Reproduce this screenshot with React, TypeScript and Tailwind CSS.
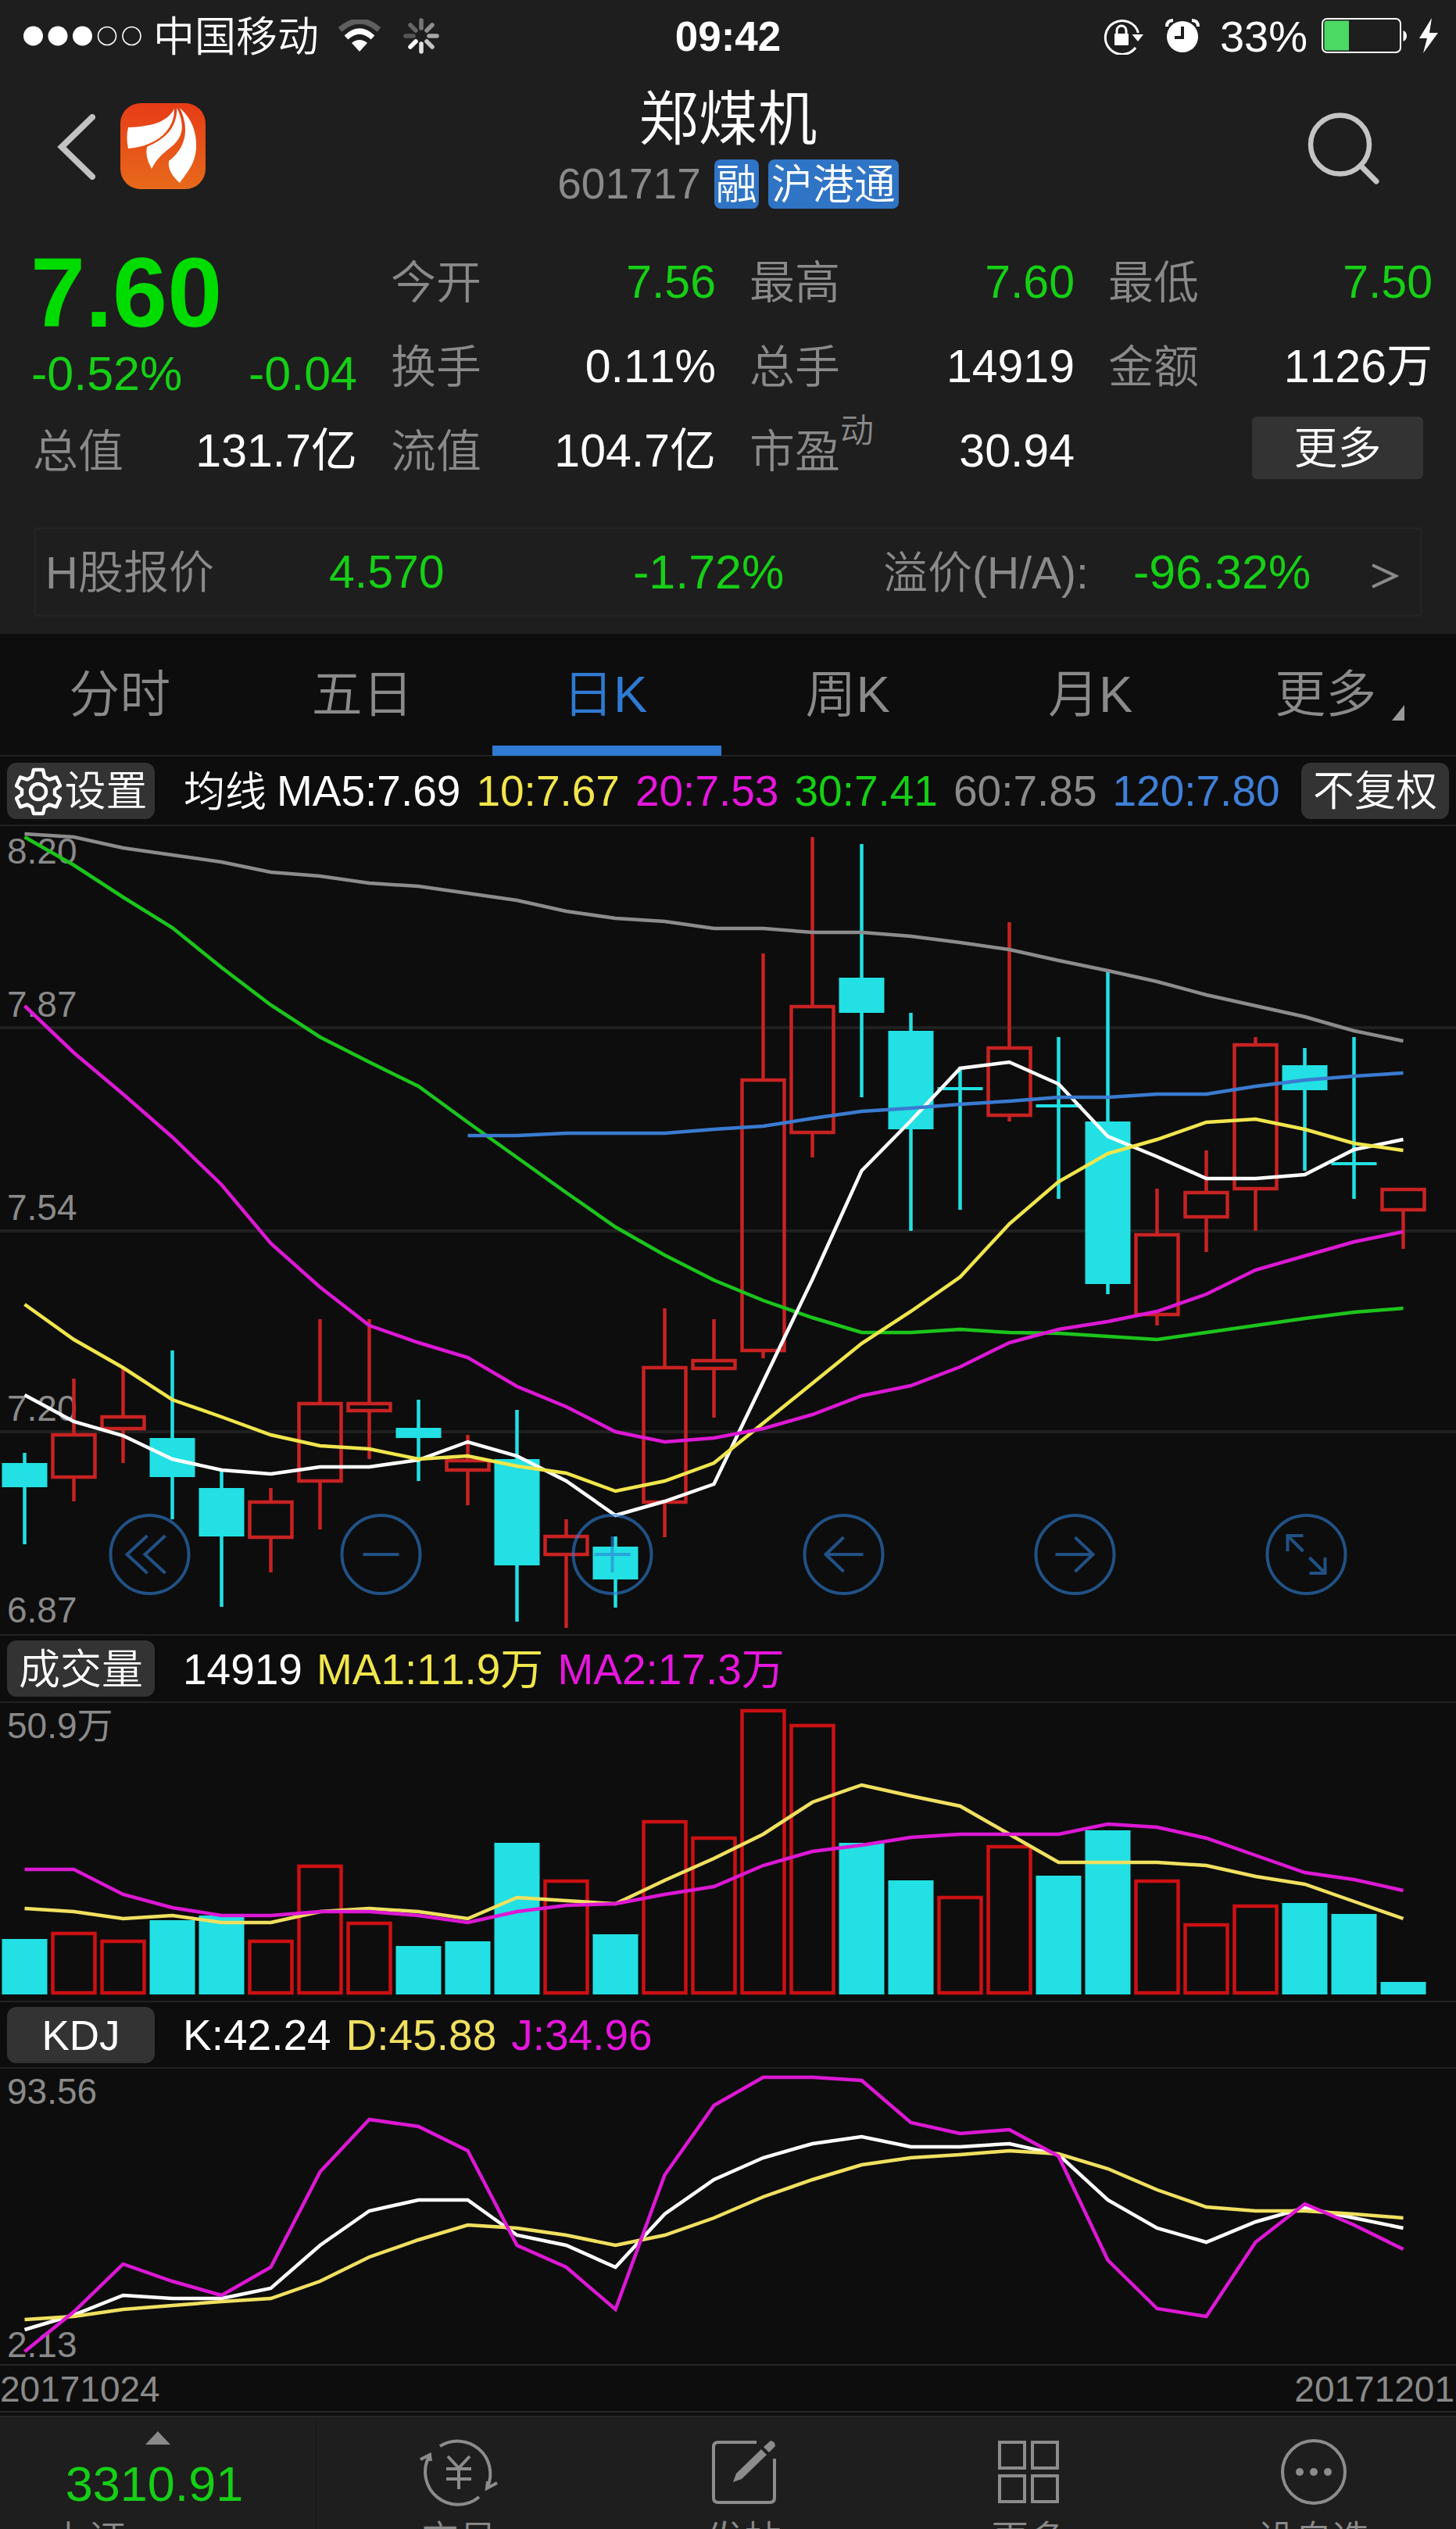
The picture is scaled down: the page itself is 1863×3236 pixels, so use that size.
import type { ReactNode } from "react";

type Direction = "up" | "down";

// [direction, high, body top, body bottom, low]
type Candle = [Direction, number, number, number, number];

const PITCH = 63;
const FIRST_X = 31.5;
const BODY_WIDTH = 58;

const xAt = (index: number) => FIRST_X + index * PITCH;

const CANDLES: Candle[] = [
  ["down", 1859, 1872, 1903, 1976],
  ["up", 1764, 1834, 1892, 1921],
  ["up", 1750, 1811, 1830, 1872],
  ["down", 1728, 1840, 1890, 1944],
  ["down", 1881, 1904, 1966, 2056],
  ["up", 1904, 1920, 1969, 2012],
  ["up", 1688, 1794, 1897, 1957],
  ["up", 1688, 1794, 1807, 1867],
  ["down", 1791, 1827, 1840, 1895],
  ["up", 1836, 1867, 1883, 1926],
  ["down", 1804, 1867, 2003, 2075],
  ["up", 1944, 1964, 1991, 2083],
  ["down", 1966, 1979, 2021, 2057],
  ["up", 1674, 1748, 1924, 1967],
  ["up", 1688, 1739, 1753, 1814],
  ["up", 1220, 1380, 1730, 1738],
  ["up", 1071, 1286, 1451, 1481],
  ["down", 1080, 1251, 1296, 1404],
  ["down", 1296, 1319, 1445, 1575],
  ["down", 1365, 1391, 1395, 1548],
  ["up", 1180, 1339, 1429, 1435],
  ["down", 1327, 1413, 1417, 1534],
  ["down", 1242, 1435, 1643, 1656],
  ["up", 1521, 1578, 1684, 1696],
  ["up", 1472, 1524, 1559, 1602],
  ["up", 1327, 1335, 1523, 1575],
  ["down", 1341, 1363, 1395, 1498],
  ["down", 1327, 1487, 1491, 1534],
  ["up", 1520, 1520, 1550, 1598],
];

const MA5 = [
  1785, 1819, 1837, 1867, 1881, 1886, 1877, 1877, 1868, 1845, 1863, 1895, 1939, 1921, 1899, 1768,
  1637, 1498, 1434, 1367, 1359, 1387, 1454, 1480, 1508, 1508, 1503, 1471, 1458,
];
const MA10 = [
  1669, 1714, 1750, 1791, 1813, 1836, 1850, 1854, 1867, 1863, 1876, 1885, 1908, 1895, 1872, 1821,
  1770, 1719, 1678, 1634, 1566, 1512, 1476, 1458, 1436, 1432, 1445, 1463, 1472,
];
const MA20 = [
  1287, 1347, 1400, 1455, 1516, 1591, 1647, 1696, 1718, 1737, 1774, 1800, 1832, 1845, 1840, 1828,
  1810, 1786, 1773, 1749, 1718, 1701, 1691, 1678, 1656, 1625, 1607, 1589, 1576,
];
const MA30 = [
  1071, 1107, 1148, 1187, 1238, 1286, 1327, 1359, 1390, 1436, 1481, 1526, 1570, 1606, 1638, 1664,
  1686, 1705, 1705, 1701, 1705, 1706, 1710, 1714, 1705, 1696, 1687, 1679, 1674,
];
const MA60 = [
  1067, 1071, 1085, 1094, 1103, 1116, 1121, 1130, 1134, 1143, 1152, 1166, 1175, 1179, 1188, 1188,
  1193, 1193, 1198, 1206, 1215, 1229, 1242, 1256, 1273, 1287, 1301, 1319, 1332,
];
const MA120 = [
  1453, 1453, 1450, 1450, 1450, 1445, 1441, 1431, 1422, 1418, 1413, 1409, 1404, 1404, 1400, 1400,
  1390, 1382, 1377, 1373,
];

const VOLUMES: [Direction, number][] = [
  ["down", 2481],
  ["up", 2472],
  ["up", 2482],
  ["down", 2457],
  ["down", 2451],
  ["up", 2482],
  ["up", 2386],
  ["up", 2459],
  ["down", 2490],
  ["down", 2484],
  ["down", 2358],
  ["up", 2405],
  ["down", 2475],
  ["up", 2329],
  ["up", 2350],
  ["up", 2187],
  ["up", 2206],
  ["down", 2358],
  ["down", 2406],
  ["up", 2426],
  ["up", 2361],
  ["down", 2400],
  ["down", 2342],
  ["up", 2405],
  ["up", 2461],
  ["up", 2437],
  ["down", 2435],
  ["down", 2449],
  ["down", 2536],
];
const VOL_MA1 = [
  2442, 2446, 2455, 2451, 2460, 2460, 2446, 2442, 2446, 2455, 2428, 2432, 2436, 2406, 2378, 2347,
  2306, 2284, 2298, 2311, 2347, 2383, 2383, 2383, 2387, 2401, 2411, 2433, 2455,
];
const VOL_MA2 = [
  2392, 2392, 2424, 2441, 2451, 2451, 2446, 2446, 2451, 2460, 2446, 2438, 2436, 2424, 2414, 2387,
  2369, 2361, 2351, 2347, 2347, 2347, 2334, 2338, 2352, 2374, 2396, 2405, 2419,
];

const KDJ_K = [
  2981, 2962, 2937, 2941, 2941, 2928, 2873, 2829, 2815, 2815, 2860, 2873, 2901, 2833, 2789, 2761,
  2743, 2734, 2747, 2747, 2743, 2757, 2815, 2851, 2869, 2843, 2825, 2838, 2851,
];
const KDJ_D = [
  2968, 2964, 2955, 2950, 2945, 2941, 2919, 2888, 2866, 2847, 2851, 2860, 2873, 2860, 2838, 2811,
  2789, 2770, 2761, 2757, 2752, 2756, 2775, 2802, 2824, 2829, 2829, 2833, 2838,
];
const KDJ_J = [
  3009, 2958, 2897, 2919, 2937, 2901, 2779, 2712, 2721, 2752, 2873, 2901, 2955, 2783, 2694, 2658,
  2658, 2662, 2716, 2730, 2725, 2759, 2892, 2954, 2964, 2869, 2820, 2847, 2878,
];

interface SeriesProps {
  values: number[];
  color: string;
  start?: number;
}

function Series({ values, color, start = 0 }: SeriesProps) {
  const points = values.map((y, i) => `${xAt(i + start)},${y}`).join(" ");
  return <polyline points={points} fill="none" stroke={color} strokeWidth={4.5} />;
}

function AxisLabel({ y, children }: { y: number; children: ReactNode }) {
  return (
    <text x={9} y={y} fontSize={46} fill="#8a8a8a">
      {children}
    </text>
  );
}

function StatusBar() {
  return (
    <div className="grid h-[91px] grid-cols-[1fr_auto_1fr] items-center leading-none">
      <div className="flex items-center pl-[30px]">
        <svg className="h-[26px] w-[152px]" viewBox="0 0 152 26">
          <circle cx="12.5" cy="13" r="12.5" fill="#fff" />
          <circle cx="44" cy="13" r="12.5" fill="#fff" />
          <circle cx="75.500" cy="13" r="12.5" fill="#fff" />
          <circle cx="107" cy="13" r="11.5" fill="none" stroke="#fff" strokeWidth="1.6" />
          <circle cx="138.500" cy="13" r="11.5" fill="none" stroke="#fff" strokeWidth="1.6" />
        </svg>
        <span className="ml-[14px] pt-[3px] text-[53px] font-[350]">中国移动</span>
        <svg className="ml-6 h-[42px] w-[56px]" viewBox="0 0 56 42">
          <path d="M3 13Q28 -9 53 13" fill="none" stroke="#5f5f5f" strokeWidth="7" />
          <path d="M11 23Q28 7 45 23" fill="none" stroke="#fff" strokeWidth="7" />
          <path d="M18 30Q28 22 38 30L28 41Z" fill="#fff" />
        </svg>
        <svg className="ml-[28px] h-[46px] w-[46px]" viewBox="-23 -23 46 46">
          <g strokeWidth="5.500" strokeLinecap="round">
            <path d="M0 -10V-20" stroke="#777" />
            <path d="M7 -7L14 -14" stroke="#8e8e8e" />
            <path d="M10 0H20" stroke="#a8a8a8" />
            <path d="M7 7L14 14" stroke="#c4c4c4" />
            <path d="M0 10V20" stroke="#e2e2e2" />
            <path d="M-7 7L-14 14" stroke="#fff" />
            <path d="M-10 0H-20" stroke="#565656" />
            <path d="M-7 -7L-14 -14" stroke="#666" />
          </g>
        </svg>
      </div>
      <span className="pt-[2px] text-[53px] font-bold">09:42</span>
      <div className="flex items-center justify-end pr-[22px]">
        <svg className="h-[48px] w-[54px]" viewBox="0 0 54 48">
          <path d="M42 39A21.500 21.500 0 1 1 45.500 20" fill="none" stroke="#fff" strokeWidth="3" />
          <path d="M37.500 22H52L45 31Z" fill="#fff" />
          <rect x="15" y="21" width="18" height="15" rx="1" fill="#fff" />
          <path d="M18 22V17a6 6 0 0 1 12 0V22" fill="none" stroke="#fff" strokeWidth="3" />
        </svg>
        <svg className="ml-[26px] h-[44px] w-[44px]" viewBox="0 0 44 44">
          <circle cx="22" cy="23" r="20" fill="#fff" />
          <path d="M2 10Q2 2 10 2M34 2Q42 2 42 10" fill="none" stroke="#fff" strokeWidth="4" />
          <path d="M22 10V24H12" fill="none" stroke="#1e1e1e" strokeWidth="4" />
        </svg>
        <span className="ml-[26px] pt-[2px] text-[56px]">33%</span>
        <svg className="ml-[18px] h-[46px] w-[112px]" viewBox="0 0 112 46">
          <rect x="1" y="1" width="100" height="43" rx="6" fill="none" stroke="#fff" strokeWidth="2" />
          <path d="M7 3.500H35V41.500H7Q3.500 41.500 3.500 38V7Q3.500 3.500 7 3.500Z" fill="#4cd964" />
          <path d="M104.500 16Q109 18 109 23T104.500 30Z" fill="#fff" />
        </svg>
        <svg className="ml-3 h-[46px] w-[26px]" viewBox="0 0 26 46">
          <path d="M17 0L1 26H11L6 45L25 19H14Z" fill="#fff" />
        </svg>
      </div>
    </div>
  );
}

function AppLogo() {
  return (
    <svg className="h-[110px] w-[109px]" viewBox="0 0 109 110">
      <defs>
        <linearGradient id="logo" x1="0" y1="0" x2="0" y2="1">
          <stop offset="0" stopColor="#e73c17" />
          <stop offset="1" stopColor="#e76a1b" />
        </linearGradient>
      </defs>
      <rect width="109" height="110" rx="26" fill="url(#logo)" />
      <g fill="#fff">
        <path d="M10 31C38 30 60 25 69 7C70 33 48 55 10 58Q7 44 10 31Z" />
        <path d="M72.500 6C86 36 76 48 60 60Q46 71 40 84Q31 68 34 56C56 46 72 34 72.500 6Z" />
        <path d="M76 6C92 20 98 38 97 58C95 78 88 85 76 102Q60 88 62 74C78 62 92 40 76 6Z" />
      </g>
    </svg>
  );
}

function NavBar() {
  return (
    <div className="grid h-[216px] grid-cols-[1fr_auto_1fr] leading-none">
      <div className="flex items-start pt-[41px] pl-[72px]">
        <svg className="mt-3.5 h-[84px] w-[50px]" viewBox="0 0 50 84">
          <path d="M46 4L7 42L46 80" fill="none" stroke="#c2c2c2" strokeWidth="8" strokeLinecap="round" />
        </svg>
        <div className="ml-[32px]">
          <AppLogo />
        </div>
      </div>
      <div className="flex flex-col items-center pt-[24px]">
        <h1 className="text-[76px] font-[350]">郑煤机</h1>
        <div className="mt-[13px] flex items-center">
          <span className="text-[55px] text-[#8a8a8a]">601717</span>
          <span className="ml-[17px] flex h-[63px] w-[57px] items-center justify-center rounded-lg bg-[#2f74c5] pt-[2px] text-[53px] font-[350]">
            融
          </span>
          <span className="ml-3 flex h-[63px] w-[167px] items-center justify-center rounded-lg bg-[#2f74c5] pt-[2px] text-[53px] font-[350]">
            沪港通
          </span>
        </div>
      </div>
      <div className="flex items-start justify-end pt-[52px] pr-[97px]">
        <svg className="h-[94px] w-[94px]" viewBox="0 0 94 94">
          <circle cx="42.500" cy="42" r="37.500" fill="none" stroke="#c4c4c4" strokeWidth="6.500" />
          <path d="M69 69L89 89" stroke="#c4c4c4" strokeWidth="7" strokeLinecap="round" />
        </svg>
      </div>
    </div>
  );
}

interface QuoteProps {
  label: string;
  value: string;
  note?: string;
  green?: boolean;
}

function Quote({ label, value, note, green }: QuoteProps) {
  return (
    <div className="flex h-[108px] items-center justify-between">
      <span className="flex pt-[2px] text-[58px] font-[350] text-[#8a8a8a]">
        {label}
        {note && <span className="-mt-[19px] text-[43px]">{note}</span>}
      </span>
      <span className={green ? "text-[#16cf16]" : "text-white"}>{value}</span>
    </div>
  );
}

function QuotePanel() {
  return (
    <div className="grid h-[324px] grid-cols-[415px_416px_416px_415px] gap-x-[43px] pl-[42px] text-[59px] leading-none">
      <div>
        <div className="-ml-[3px] flex h-[135px] items-center text-[126px] font-bold text-[#00dc00]">7.60</div>
        <div className="-ml-[2px] flex h-[81px] items-start justify-between pt-[6px] text-[61px] text-[#16cf16]">
          <span>-0.52%</span>
          <span>-0.04</span>
        </div>
        <Quote label="总值" value="131.7亿" />
      </div>
      <div>
        <Quote label="今开" value="7.56" green />
        <Quote label="换手" value="0.11%" />
        <Quote label="流值" value="104.7亿" />
      </div>
      <div>
        <Quote label="最高" value="7.60" green />
        <Quote label="总手" value="14919" />
        <Quote label="市盈" note="动" value="30.94" />
      </div>
      <div>
        <Quote label="最低" value="7.50" green />
        <Quote label="金额" value="1126万" />
        <div className="flex justify-end pt-[10px] pr-3">
          <button className="flex h-[80px] w-[219px] items-center justify-center rounded-md bg-[#333] pt-[2px] text-[56px] font-[350]">
            更多
          </button>
        </div>
      </div>
    </div>
  );
}

function HShareBar() {
  return (
    <div className="mx-[44px] mt-[44px] grid h-[114px] grid-cols-[363px_389px_320px_320px_304px_auto] items-center border-2 border-[#242424] pl-[12px] text-[59px] leading-none text-[#16cf16]">
      <span className="pt-[2px] text-[58px] font-[350] text-[#8a8a8a]">H股报价</span>
      <span>4.570</span>
      <span className="text-[61px]">-1.72%</span>
      <span className="pt-[2px] text-[57px] font-[350] text-[#8a8a8a]">溢价(H/A):</span>
      <span className="text-[61px]">-96.32%</span>
      <svg className="mt-[10px] h-[34px] w-[36px]" viewBox="0 0 36 34">
        <path d="M2 3L32 17L2 31" fill="none" stroke="#8a8a8a" strokeWidth="4" />
      </svg>
    </div>
  );
}

const TABS = ["分时", "五日", "日K", "周K", "月K"];

function Tabs() {
  return (
    <div className="grid h-[157px] grid-cols-6 border-b-2 border-[#222] text-[65px] leading-none font-[350]">
      {TABS.map((tab) => {
        const active = tab === "日K";
        return (
          <div key={tab} className={`flex flex-col items-center ${active ? "text-[#2f7ad2]" : "text-[#8a8a8a]"}`}>
            <span className="mt-[45px] -ml-[4px] h-[98px]">{tab}</span>
            {active && <span className="h-[13px] w-[293px] bg-[#2f7ad2]" />}
          </div>
        );
      })}
      <div className="flex justify-center pt-[45px] text-[#8a8a8a]">
        <span className="ml-[13px]">更多</span>
        <svg className="mt-[46px] ml-[20px] h-5 w-4" viewBox="0 0 16 20">
          <path d="M16 0V20H0Z" fill="#9a9a9a" />
        </svg>
      </div>
    </div>
  );
}

function Pill({ children }: { children: ReactNode }) {
  return (
    <button className="flex h-[72px] w-[189px] shrink-0 items-center justify-center rounded-xl bg-[#333] pt-[2px] text-[53px] font-[350]">
      {children}
    </button>
  );
}

function GearIcon() {
  return (
    <svg className="h-[62px] w-[60px]" viewBox="0 0 60 62">
      <path
        d="M24 3h12l2 9 6 3.500 9-3 5 11-7 5v6l7 5-5 11-9-3-6 3.500-2 8H24l-2-8-6-3.500-9 3-5-11 7-5v-6l-7-5 5-11 9 3 6-3.500Z"
        fill="none"
        stroke="#fff"
        strokeWidth="4.500"
        strokeLinejoin="round"
      />
      <circle cx="30" cy="31" r="10" fill="none" stroke="#fff" strokeWidth="4.500" />
    </svg>
  );
}

function MovingAverageRow() {
  return (
    <div className="flex h-[89px] items-center border-b-2 border-[#222] px-[9px] text-[55px] leading-none">
      <Pill>
        <GearIcon />
        <span className="ml-1">设置</span>
      </Pill>
      <div className="mr-auto ml-[37px] flex gap-[20px] pt-[2px]">
        <span className="-mr-[7px] pt-[2px] text-[53px] font-[350]">均线</span>
        <span>MA5:7.69</span>
        <span className="text-[#f0e64c]">10:7.67</span>
        <span className="text-[#e616dc]">20:7.53</span>
        <span className="text-[#16cf16]">30:7.41</span>
        <span className="text-[#8a8a8a]">60:7.85</span>
        <span className="text-[#3f80d8]">120:7.80</span>
      </div>
      <Pill>不复权</Pill>
    </div>
  );
}

function ToolButton({ cx, children }: { cx: number; children: ReactNode }) {
  return (
    <g transform={`translate(${cx} 1989)`} fill="none" stroke="#2f7fd6" strokeWidth={4} opacity={0.6}>
      <circle r={50} />
      {children}
    </g>
  );
}

function CandleChart() {
  return (
    <svg className="h-[1034px] w-full" viewBox="0 1057 1863 1034">
      <path d="M0 1315H1863M0 1575H1863M0 1832H1863" stroke="#202020" strokeWidth={4} />
      <AxisLabel y={1105}>8.20</AxisLabel>
      <AxisLabel y={1301}>7.87</AxisLabel>
      <AxisLabel y={1561}>7.54</AxisLabel>
      <AxisLabel y={1818}>7.20</AxisLabel>
      <AxisLabel y={2076}>6.87</AxisLabel>
      {CANDLES.map(([direction, high, top, bottom, low], i) => {
        const x = xAt(i);
        if (direction === "down") {
          return (
            <g key={i} fill="#22e0e3">
              <rect x={x - 2.25} y={high} width={4.5} height={low - high} />
              <rect x={x - BODY_WIDTH / 2} y={top} width={BODY_WIDTH} height={bottom - top} />
            </g>
          );
        }
        return (
          <g key={i} fill="none" stroke="#c82222" strokeWidth={4.5}>
            <path d={`M${x} ${high}V${top}M${x} ${bottom}V${low}`} />
            <rect x={x - 27} y={top + 2} width={54} height={bottom - top - 4} />
          </g>
        );
      })}
      <Series values={MA60} color="#8c8c8c" />
      <Series values={MA30} color="#1cc41c" />
      <Series values={MA5} color="#fff" />
      <Series values={MA10} color="#f0e64c" />
      <Series values={MA20} color="#dc18d4" />
      <Series values={MA120} color="#3a7bd0" start={9} />
      <ToolButton cx={191.5}>
        <path d="M-3 -24L-29 0L-3 24M20 -24L-6 0L20 24" />
      </ToolButton>
      <ToolButton cx={487.5}>
        <path d="M-23 0H23" />
      </ToolButton>
      <ToolButton cx={783.5}>
        <path d="M-23 0H23M0 -23V23" />
      </ToolButton>
      <ToolButton cx={1079.5}>
        <path d="M25 0H-23M0 -22L-23 0L0 22" />
      </ToolButton>
      <ToolButton cx={1375.5}>
        <path d="M-25 0H23M0 -22L23 0L0 22" />
      </ToolButton>
      <ToolButton cx={1671.5}>
        <path d="M-4 -4L-24 -24M-4 -24H-24V-4M4 4L24 24M4 24H24V4" />
      </ToolButton>
    </svg>
  );
}

function VolumeChart() {
  return (
    <svg className="h-[381px] w-full" viewBox="0 2179 1863 381">
      <AxisLabel y={2224}>50.9万</AxisLabel>
      {VOLUMES.map(([direction, top], i) =>
        direction === "down" ? (
          <rect key={i} x={xAt(i) - 29} y={top} width={58} height={2552 - top} fill="#22e0e3" />
        ) : (
          <rect
            key={i}
            x={xAt(i) - 27}
            y={top + 2}
            width={54}
            height={2548 - top}
            fill="none"
            stroke="#cc1013"
            strokeWidth={4.5}
          />
        ),
      )}
      <Series values={VOL_MA1} color="#f0e060" />
      <Series values={VOL_MA2} color="#dc18d4" />
    </svg>
  );
}

function KdjChart() {
  return (
    <svg className="h-[378px] w-full" viewBox="0 2647 1863 378">
      <AxisLabel y={2692}>93.56</AxisLabel>
      <AxisLabel y={3016}>2.13</AxisLabel>
      <Series values={KDJ_K} color="#fff" />
      <Series values={KDJ_D} color="#f0e060" />
      <Series values={KDJ_J} color="#dc18d4" />
    </svg>
  );
}

function FooterItem({ label, children }: { label: string; children: ReactNode }) {
  return (
    <div className="flex flex-1 flex-col items-center pt-[24px]">
      <svg className="h-[92px] w-[100px] shrink-0" viewBox="-50 -46 100 92" fill="none" stroke="#8c8c8c" strokeWidth={4}>
        {children}
      </svg>
      <span className="mt-[17px] text-[48px] font-[350] whitespace-nowrap">{label}</span>
    </div>
  );
}

function Footer() {
  return (
    <div className="flex h-[143px] bg-[#1e1e1e] leading-none text-[#8a8a8a]">
      <div className="flex w-[405px] flex-col items-center border-r-2 border-[#1a1a1a] pt-[18px]">
        <svg className="h-[17px] w-[32px] shrink-0" viewBox="0 0 32 17">
          <path d="M16 0L32 17H0Z" fill="#8a8a8a" />
        </svg>
        <span className="mt-[19px] -ml-2 text-[63px] text-[#16cf16]">3310.91</span>
        <span className="mt-[16px] self-start pl-[65px] text-[48px] font-[350]">上证</span>
      </div>
      <FooterItem label="交易">
        <path d="M-24 -33A42 42 0 0 1 37 19M26 32A42 42 0 0 1 -38 -20" />
        <path d="M-49 -16L-37 -22L-36 -14M49 14L36 21L37 12" />
        <path d="M-14 -20L0 -5L14 -20M0 -5V22M-16 -4H16M-16 9H16" />
      </FooterItem>
      <FooterItem label="发帖">
        <path d="M16 -38H-33Q-39 -38 -39 -32V33Q-39 39 -33 39H33Q39 39 39 33V-17" />
        <path d="M-14 13L-10 2L22 -29L29 -22L-3 9ZM25 -32L34 -40Q40 -39 40 -33L32 -25Z" fill="#8c8c8c" stroke="none" />
      </FooterItem>
      <FooterItem label="更多">
        <path d="M-37 -38H-5V-5H-37ZM5 -38H37V-5H5ZM-37 5H-5V38H-37ZM5 5H37V38H5Z" />
      </FooterItem>
      <FooterItem label="设自选">
        <circle r="40" />
        <g fill="#8c8c8c" stroke="none">
          <circle cx="-18" r="5" />
          <circle r="5" />
          <circle cx="18" r="5" />
        </g>
      </FooterItem>
    </div>
  );
}

export default function App() {
  return (
    <div className="flex h-[3236px] w-[1863px] flex-col overflow-hidden bg-[#0d0d0d] font-['Liberation_Sans','Noto_Sans_CJK_SC',sans-serif] text-white [font-kerning:none]">
      <header className="h-[811px] bg-[#1e1e1e]">
        <StatusBar />
        <NavBar />
        <QuotePanel />
        <HShareBar />
      </header>
      <Tabs />
      <MovingAverageRow />
      <CandleChart />
      <div className="flex h-[88px] items-center gap-[18px] border-y-2 border-[#222] pl-[9px] text-[55px] leading-none">
        <Pill>成交量</Pill>
        <span className="ml-[18px] pt-[2px]">14919</span>
        <span className="pt-[2px] text-[#f0e64c]">MA1:11.9万</span>
        <span className="pt-[2px] text-[#e616dc]">MA2:17.3万</span>
      </div>
      <VolumeChart />
      <div className="flex h-[87px] items-center gap-[19px] border-y-2 border-[#222] pl-[9px] text-[55px] leading-none">
        <Pill>KDJ</Pill>
        <span className="ml-[17px] pt-[2px]">K:42.24</span>
        <span className="pt-[2px] text-[#f0e060]">D:45.88</span>
        <span className="pt-[2px] text-[#e616dc]">J:34.96</span>
      </div>
      <KdjChart />
      <div className="flex h-[62px] items-center justify-between border-y-2 border-[#262626] pt-[2px] pr-[2px] text-[46px] leading-none text-[#8a8a8a]">
        <span>20171024</span>
        <span>20171201</span>
      </div>
      <div className="h-[6px] shrink-0 border-b-2 border-[#262626]" />
      <Footer />
    </div>
  );
}
